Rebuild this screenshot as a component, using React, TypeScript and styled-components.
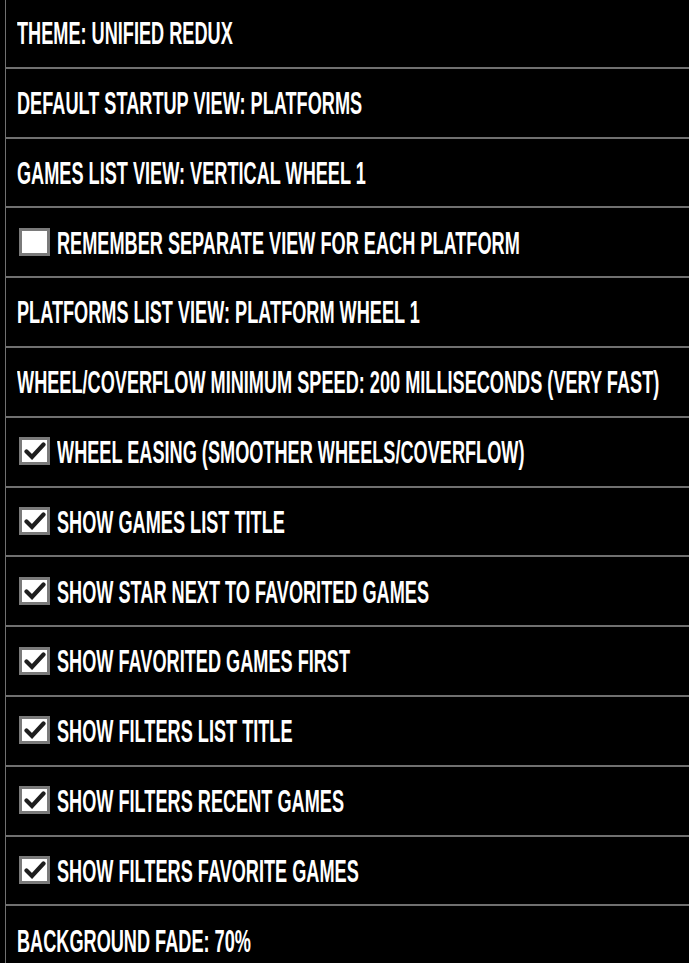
import React from "react";
import styled, { createGlobalStyle } from "styled-components";

const GlobalStyle = createGlobalStyle`
  html, body {
    margin: 0;
    padding: 0;
    background: #000;
  }
`;

type Item = { label: string; check?: boolean };

const items: Item[] = [
  { label: "Theme: Unified Redux" },
  { label: "Default Startup View: Platforms" },
  { label: "Games List View: Vertical Wheel 1" },
  { label: "Remember Separate View For Each Platform", check: false },
  { label: "Platforms List View: Platform Wheel 1" },
  { label: "Wheel/Coverflow Minimum Speed: 200 Milliseconds (Very Fast)" },
  { label: "Wheel Easing (Smoother Wheels/Coverflow)", check: true },
  { label: "Show Games List Title", check: true },
  { label: "Show Star Next To Favorited Games", check: true },
  { label: "Show Favorited Games First", check: true },
  { label: "Show Filters List Title", check: true },
  { label: "Show Filters Recent Games", check: true },
  { label: "Show Filters Favorite Games", check: true },
  { label: "Background Fade: 70%" },
];

const Page = styled.div`
  width: 689px;
  height: 963px;
  overflow: hidden;
  background: #000;
`;

const List = styled.div`
  margin-left: 5px;
  margin-top: -1px;
  border-left: 1px solid #707070;
  display: flex;
  flex-direction: column;
`;

const Row = styled.div<{ $check?: boolean }>`
  box-sizing: border-box;
  height: 69.8px;
  flex-shrink: 0;
  border-bottom: 2px solid #707070;
  display: flex;
  align-items: center;
  padding-left: ${(p) => (p.$check ? "13px" : "11px")};
  gap: 7px;
`;

const Box = styled.div`
  box-sizing: border-box;
  width: 31px;
  height: 28px;
  border: 3px solid #7a7a7a;
  background: #fff;
  display: flex;
  align-items: center;
  justify-content: center;
  flex-shrink: 0;
  margin-top: -1px;
`;

const Label = styled.span`
  display: inline-block;
  font-family: "Liberation Sans", Arial, sans-serif;
  font-weight: bold;
  font-size: 30.5px;
  line-height: 1;
  color: #fff;
  text-transform: uppercase;
  white-space: nowrap;
  transform: scaleX(0.595);
  transform-origin: left center;
  margin-top: 1px;
`;

const Check = () => (
  <svg width="22" height="18" viewBox="0 0 22 18">
    <path
      d="M2.5 9.5 L8 15 L19.5 2.5"
      fill="none"
      stroke="#1e1e1e"
      strokeWidth="4.2"
      strokeLinecap="round"
      strokeLinejoin="miter"
    />
  </svg>
);

export default function App() {
  return (
    <Page>
      <GlobalStyle />
      <List>
        {items.map((it) => (
          <Row key={it.label} $check={it.check !== undefined}>
            {it.check !== undefined && <Box>{it.check && <Check />}</Box>}
            <Label>{it.label}</Label>
          </Row>
        ))}
      </List>
    </Page>
  );
}
